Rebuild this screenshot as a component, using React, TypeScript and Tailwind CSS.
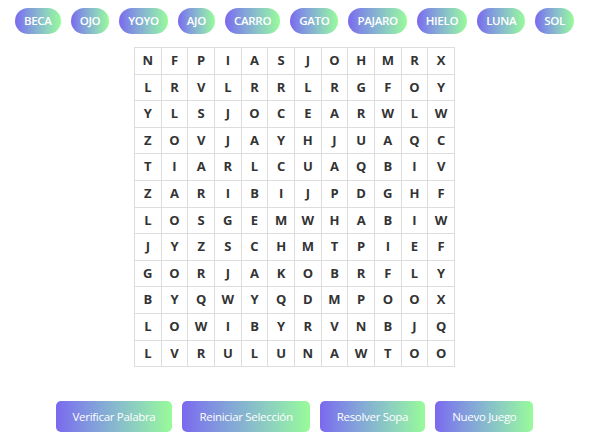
const words = ["BECA", "OJO", "YOYO", "AJO", "CARRO", "GATO", "PAJARO", "HIELO", "LUNA", "SOL"];

const rows = [
  "NFPIASJOHMRX",
  "LRVLRRLRGFOY",
  "YLSJOCEARWLW",
  "ZOVJAYHJUAQC",
  "TIARLCUAQBIV",
  "ZARIBIJPDGHF",
  "LOSGEMWHABIW",
  "JYZSCHMTPIEF",
  "GORJAKOBRFLY",
  "BYQWYQDMPOOX",
  "LOWIBYRVNBJQ",
  "LVRULUNAWTOO",
];

const actions = ["Verificar Palabra", "Reiniciar Selección", "Resolver Sopa", "Nuevo Juego"];

export default function App() {
  return (
    <div className="min-h-screen bg-white font-['Open_Sans',sans-serif] pt-2 flex flex-col items-center">
      {/* word list */}
      <div className="flex gap-[10px] justify-center">
        {words.map((w) => (
          <span
            key={w}
            className="h-[26px] px-[9px] flex items-center rounded-full bg-gradient-to-r from-[#7b68ee] to-[#98fb98] text-white text-[11.5px] font-semibold tracking-[-0.3px]"
          >
            {w}
          </span>
        ))}
      </div>

      {/* letter board */}
      <div className="mt-[13px] grid grid-cols-12 w-[321px] border-l border-t border-[#ddd]">
        {rows.flatMap((r, i) =>
          r.split("").map((ch, j) => (
            <div
              key={`${i}-${j}`}
              className="h-[26.6px] flex items-center justify-center border-r border-b border-[#ddd] text-[13px] font-bold text-[#333]"
            >
              {ch}
            </div>
          ))
        )}
      </div>

      {/* controls */}
      <div className="mt-[34px] flex gap-[10px] justify-center">
        {actions.map((a) => (
          <button
            key={a}
            className="h-[31px] px-[17px] rounded-[5px] bg-gradient-to-r from-[#7b68ee] to-[#98fb98] text-white text-[11.5px] font-medium tracking-[-0.3px]"
          >
            {a}
          </button>
        ))}
      </div>
    </div>
  );
}
